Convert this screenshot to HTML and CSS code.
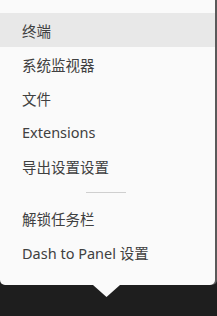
FILE: index.html
```html
<!DOCTYPE html>
<html lang="zh-CN">
<head>
<meta charset="utf-8">
<link rel="stylesheet" href="styles.css">
</head>
<body>
<div class="popup">
  <div class="menu">
    <div class="item active">终端</div>
    <div class="item">系统监视器</div>
    <div class="item">文件</div>
    <div class="item">Extensions</div>
    <div class="item">导出设置设置</div>
    <div class="separator"><span class="line"></span></div>
    <div class="item">解锁任务栏</div>
    <div class="item">Dash to Panel 设置</div>
  </div>
  <div class="arrow"></div>
</div>
</body>
</html>
```
FILE: styles.css
```css
html, body {
  margin: 0;
  padding: 0;
}
body {
  background: #1e1e1e;
  width: 217px;
  height: 316px;
  overflow: hidden;
  font-family: "Noto Sans", "Noto Sans CJK SC", sans-serif;
}
.popup {
  width: 217px;
  display: flex;
  flex-direction: column;
}
.menu {
  width: 215px;
  background: #fafafa;
  padding: 13px 0 16px;
  border-radius: 0 0 5px 5px;
  box-shadow: 2px 0 0 #5a5a5a;
  display: flex;
  flex-direction: column;
}
.item {
  height: 34px;
  display: flex;
  align-items: center;
  padding-left: 22px;
  font-size: 14.5px;
  color: #404040;
  white-space: nowrap;
}
.item.active {
  background: #e8e8e8;
}
.separator {
  height: 18px;
  display: flex;
  align-items: center;
  padding-left: 86px;
}
.line {
  display: block;
  width: 40px;
  height: 1px;
  background: #cfcfcf;
}
.arrow {
  width: 27px;
  height: 12px;
  margin-left: 93px;
  background: #fafafa;
  clip-path: polygon(0 0, 100% 0, 50% 100%);
}
```
